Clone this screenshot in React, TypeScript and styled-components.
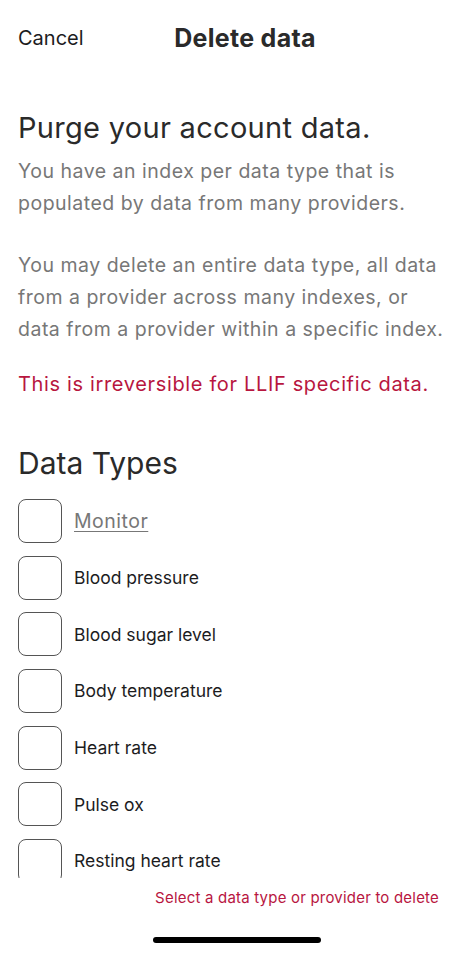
import React from "react";
import styled, { createGlobalStyle } from "styled-components";

const GlobalStyle = createGlobalStyle`
  html, body {
    margin: 0;
    padding: 0;
    background: #ffffff;
  }
  body {
    font-family: Inter, "Liberation Sans", Arial, sans-serif;
    color: #1c1c1e;
  }
`

const Screen = styled.div`
  width: 472px;
  height: 953px;
  display: flex;
  flex-direction: column;
  overflow: hidden;
  background: #ffffff;
`

const Header = styled.div`
  height: 76px;
  display: grid;
  grid-template-columns: 1fr auto 1fr;
  align-items: center;
  padding: 0 18px;
  box-sizing: border-box;
`

const CancelButton = styled.span`
  font-size: 20px;
  color: #1c1c1e;
  justify-self: start;
`

const Title = styled.span`
  font-size: 25px;
  font-weight: 700;
  letter-spacing: 0.3px;
  color: #2a2a2a;
  margin-left: 18px;
`

const Content = styled.div`
  padding: 32px 18px 0;
  height: 802px;
  overflow: hidden;
  box-sizing: border-box;
`

const Heading = styled.h1`
  margin: 0 0 7px;
  font-size: 29px;
  font-weight: 400;
  letter-spacing: 0.3px;
  line-height: 40px;
  color: #2a2a2a;
`

const Paragraph = styled.p<{ $warn?: boolean; $space?: number }>`
  margin: 0 0 ${(p) => p.$space ?? 30}px;
  font-size: ${(p) => (p.$warn ? 20 : 19.5)}px;
  letter-spacing: ${(p) => (p.$warn ? 0.65 : 0.5)}px;
  line-height: 32px;
  color: ${(p) => (p.$warn ? "#b8163f" : "#777777")};
`

const SectionTitle = styled.h2`
  margin: 0 0 16px;
  font-size: 30px;
  font-weight: 400;
  line-height: 40px;
  color: #2a2a2a;
`

const List = styled.div`
  display: flex;
  flex-direction: column;
  gap: 12.67px;
`

const Row = styled.label`
  display: flex;
  align-items: center;
  gap: 12px;
`

const Box = styled.span`
  width: 44px;
  height: 44px;
  box-sizing: border-box;
  border: 1.5px solid #555555;
  border-radius: 8px;
  flex-shrink: 0;
`

const Label = styled.span<{ $link?: boolean }>`
  font-size: ${(p) => (p.$link ? 19.5 : 17.5)}px;
  letter-spacing: ${(p) => (p.$link ? 0.5 : 0)}px;
  color: ${(p) => (p.$link ? "#777777" : "#1c1c1e")};
  text-decoration: ${(p) => (p.$link ? "underline" : "none")};
  text-underline-offset: 3px;
`

const Footer = styled.div`
  flex: 1;
  display: flex;
  flex-direction: column;
  align-items: flex-end;
  padding: 11px 33px 0 18px;
  box-sizing: border-box;
`

const Hint = styled.span`
  font-size: 15px;
  letter-spacing: 0.2px;
  line-height: 18px;
  color: #b8163f;
`

const HomeBar = styled.div`
  align-self: center;
  margin: 30px 0 0 0;
  width: 168px;
  height: 6px;
  border-radius: 3px;
  background: #000000;
  transform: translateX(8px);
`

const types = [
  "Blood pressure",
  "Blood sugar level",
  "Body temperature",
  "Heart rate",
  "Pulse ox",
  "Resting heart rate",
]

const App = () => {
  return (
    <Screen>
      <GlobalStyle />
      <Header>
        <CancelButton>Cancel</CancelButton>
        <Title>Delete data</Title>
        <span />
      </Header>
      <Content>
        <Heading>Purge your account data.</Heading>
        <Paragraph>
          You have an index per data type that is populated by data from many providers.
        </Paragraph>
        <Paragraph $space={23}>
          You may delete an entire data type, all data from a provider across many indexes, or
          data from a provider within a specific index.
        </Paragraph>
        <Paragraph $warn $space={43}>This is irreversible for LLIF specific data.</Paragraph>
        <SectionTitle>Data Types</SectionTitle>
        <List>
          <Row>
            <Box />
            <Label $link>Monitor</Label>
          </Row>
          {types.map((t) => (
            <Row key={t}>
              <Box />
              <Label>{t}</Label>
            </Row>
          ))}
        </List>
      </Content>
      <Footer>
        <Hint>Select a data type or provider to delete</Hint>
        <HomeBar />
      </Footer>
    </Screen>
  )
}

export default App;
